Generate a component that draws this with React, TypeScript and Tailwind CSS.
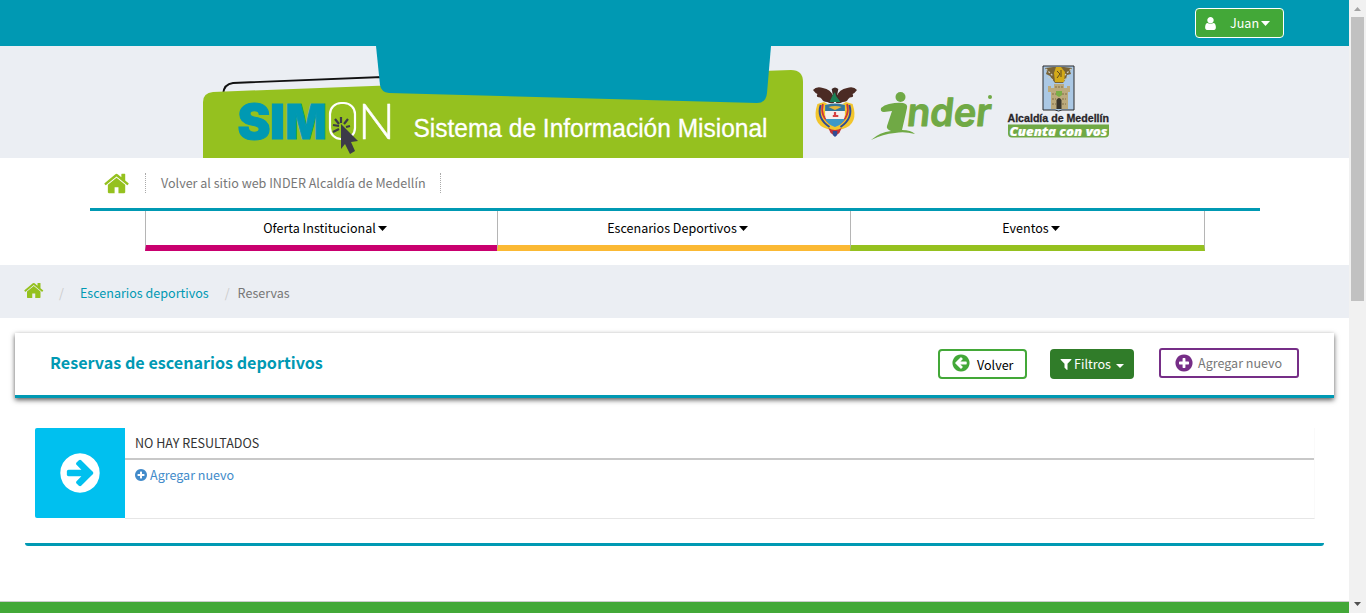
import type { ReactNode } from "react";

const CIRCLE =
  "M1664 896q0 209-103 385.5t-279.5 279.5-385.5 103-385.5-103-279.5-279.5-103-385.5 103-385.5 279.5-279.5 385.5-103 385.5 103 279.5 279.5 103 385.5z";
const PATHS = {
  home: "M1408 992v480q0 26-19 45t-45 19h-384v-384h-256v384h-384q-26 0-45-19t-19-45v-480q0-1 .5-3t.5-3l575-474 575 474q1 2 1 6zm223-69l-62 74q-8 9-21 11h-3q-13 0-21-7l-692-577-692 577q-12 8-24 7-13-2-21-11l-62-74q-8-10-7-23.5t11-21.5l719-599q32-26 76-26t76 26l244 204v-195q0-14 9-23t23-9h192q14 0 23 9t9 23v408l219 182q10 8 11 21.5t-7 23.5z",
  arrow:
    "M1413 896q0-27-18-45l-91-91-362-362q-18-18-45-18t-45 18l-91 91q-18 18-18 45t18 45l189 189h-502q-26 0-45 19t-19 45v128q0 26 19 45t45 19h502l-189 189q-18 18-18 45t18 45l91 91q18 18 45 18t45-18l362-362 91-91q18-18 18-45z" + CIRCLE,
  plus:
    "M1344 960v-128q0-26-19-45t-45-19h-256v-256q0-26-19-45t-45-19h-128q-26 0-45 19t-19 45v256h-256q-26 0-45 19t-19 45v128q0 26 19 45t45 19h256v256q0 26 19 45t45 19h128q26 0 45-19t19-45v-256h256q26 0 45-19t19-45z" + CIRCLE,
  filter:
    "M1595 295q17 41-14 70l-493 493v742q0 42-39 59-13 5-25 5-27 0-45-19l-256-256q-19-19-19-45v-486l-493-493q-31-29-14-70 17-39 59-39h1280q42 0 59 39z",
  user: "M1536 1399q0 109-62.5 187t-150.5 78h-854q-88 0-150.5-78t-62.5-187q0-85 8.5-160.5t31.5-152 58.5-131 94-89 134.5-34.5q131 128 313 128t313-128q76 0 134.5 34.5t94 89 58.5 131 31.5 152 8.5 160.5zm-256-887q0 159-112.5 271.5t-271.5 112.5-271.5-112.5-112.5-271.5 112.5-271.5 271.5-112.5 271.5 112.5 112.5 271.5z",
};

function Icon({ name, className }: { name: keyof typeof PATHS; className: string }) {
  return (
    <svg viewBox="0 0 1792 1792" fill="currentColor" fillRule="evenodd" className={`shrink-0 ${className}`}>
      <path d={PATHS[name]} />
    </svg>
  );
}

function Caret({ className = "" }: { className?: string }) {
  return (
    <svg viewBox="0 0 8 5" preserveAspectRatio="none" fill="currentColor" className={`shrink-0 ${className}`}>
      <path d="M0 0h8L4 5z" />
    </svg>
  );
}

function Coat() {
  return (
    <g transform="translate(835 112) scale(1.1 1) translate(-835 -112)">
      <path d="M834 97q-3-8-10-9-6-2-9 2 2 3 4 4-1 2 0 3 3 0 4 2 1 3 5 3 3 2 6 1zM836 97q3-8 10-9 6-2 9 2-2 3-4 4 1 2 0 3-3 0-4 2-1 3-5 3-3 2-6 1z" fill="#4b2b24" />
      <path d="M832 89q3-3 6 0l-1 6 3 7h-9l2-7z" fill="#3f2925" />
      <path d="M833 95l2-3 1 4 4 6h-10z" fill="#1c8055" />
      <path d="M819 104q-6 20 9 25l7 2 7-2q15-5 9-25l-6-2-3 2h-14l-3-2z" fill="#f2c52c" />
      <path d="M822 105q-4 13 8 22M848 105q4 13-8 22" fill="none" stroke="#304b94" strokeWidth="1.800" />
      <path d="M824 104q-3 12 7 20M846 104q3 12-7 20" fill="none" stroke="#cf3439" strokeWidth="1.600" />
      <path d="M826 105q9-3 18 0v10q0 7-9 11-9-4-9-11z" fill="#f4f0ee" />
      <path d="M826 105q9-3 18 0v6h-18z" fill="#34789c" />
      <path d="M829 107q6-2 12 0l-6 3z" fill="#e5b63a" />
      <path d="M826 119h18q-2 5-9 8-7-3-9-8z" fill="#3e98c5" />
      <path d="M835 112v5M833 116h5" stroke="#d54242" strokeWidth="2" />
      <path d="M829 128q6 4 12 0l-2 5-4 3-4-3z" fill="#c23335" />
      <path d="M833 131h4v4l-2 2-2-2z" fill="#304b94" />
    </g>
  );
}

function Crest() {
  return (
    <g>
      <path d="M1043 66h31v44h-12l-3.500 1-3.500-1h-12z" fill="#abc8e4" stroke="#29292b" strokeWidth="1" />
      <path d="M1045 68l8-1h11l8 1-2 3 1 3-4 1-1 4-3 4h-8l-3-4-2-3-4-2 1-3z" fill="#786337" />
      <path d="M1046 69l7 7M1071 69l-7 7M1048 77l5 3M1069 77l-5 3" stroke="#c9ccc4" strokeWidth="1.300" strokeDasharray="2 1.500" />
      <path d="M1056 67h5l4 5-1 10h-9l-1-9z" fill="#d4aa18" />
      <path d="M1057 71l3 3-3 4M1061 70v7" fill="none" stroke="#5e491e" />
      <path d="M1054 84h10v4h3v-2h3v6h-2v17h-17V92h-3v-6h3v2h3z" fill="#bcaa7c" />
      <path d="M1052 94h4M1062 94h5M1052 99h4M1062 99h4M1052 104h4M1062 104h4M1055 87h8" stroke="#806e47" strokeDasharray="2 1" />
      <path d="M1056 91h6v4l-3 2-3-2z" fill="#79ae45" />
      <path d="M1056.500 109v-9q2.500-4 5 0v9z" fill="#39352c" />
    </g>
  );
}

function Banner() {
  return (
    <svg width="1349" height="112" viewBox="0 46 1349 112" className="block bg-[#ebeef3]">
      <path d="M223 94q1-10 10-11l149-6v12z" fill="#ebeef3" stroke="#111" strokeWidth="1.900" />
      <path d="M203 158v-56q0-9 10-10l578-22q12 0 12 12v76z" fill="#95c11f" />
      <path d="M376 46h395l-4 47q-1 10-10 10l-368-10q-8-1-9-8z" fill="#0099b3" />
      <g fontFamily="Inter, sans-serif" fontSize="48" fontWeight="900" fill="#0099b3" stroke="#0099b3" strokeWidth="1">
        <text x="237.500" y="138.500" textLength="33" lengthAdjust="spacingAndGlyphs">S</text>
        <text x="270" y="138.500" textLength="15" lengthAdjust="spacingAndGlyphs">I</text>
        <text x="285.500" y="138.500" textLength="41" lengthAdjust="spacingAndGlyphs">M</text>
      </g>
      <rect x="330" y="103" width="25" height="36" rx="11" fill="none" stroke="#fff" strokeWidth="2.200" />
      <text x="358" y="139" fontFamily="Lato, sans-serif" fontSize="50" fontWeight="300" textLength="37" lengthAdjust="spacingAndGlyphs" fill="#fff" stroke="#fff" strokeWidth="0.500">N</text>
      <path d="M341 124l17 17-7 1 4 9-5 3-5-10-4 5z" fill="#3c3b48" />
      <path d="M341 117v6M348 119l-4 5M335 119l4 5M333 125l6 1M333 132l6-3M350 126l-4 1" stroke="#3c3b48" strokeWidth="2.200" />
      <text x="413.500" y="137" fontFamily="Liberation Sans, sans-serif" fontSize="25" textLength="354" lengthAdjust="spacingAndGlyphs" fill="#fff" stroke="#fff" strokeWidth="0.300">Sistema de Información Misional</text>
      <Coat />
      <g fill="#70a945">
        <circle cx="900.500" cy="97" r="5" />
        <path d="M881 108q3-3 8-4 9-2 14-1 5 1 4 5l-2 9-3 13q9 0 13 4-11-3-20-1-12 1-24 7 9-8 20-9-5-2-4-5l5-15-8 1q-4 0-3-4z" />
        <circle cx="990" cy="97" r="2" />
      </g>
      <g transform="translate(906 125.500) skewX(-6)">
        <text x="0" y="0" fontFamily="Inter, Liberation Sans, sans-serif" fontSize="39" fontWeight="600" textLength="84" lengthAdjust="spacingAndGlyphs" fill="#70a945" stroke="#70a945" strokeWidth="1" strokeLinejoin="round">nder</text>
      </g>
      <Crest />
      <text x="1007.500" y="122" fontFamily="Liberation Sans, sans-serif" fontSize="11.500" fontWeight="700" textLength="101.500" lengthAdjust="spacingAndGlyphs" fill="#282528" stroke="#282528" strokeWidth="0.300">Alcaldía de Medellín</text>
      <path d="M1008 124.500h101v9q0 4-4 4h-93q-4 0-4-4z" fill="#70a945" />
      <text x="1009.500" y="135.500" fontFamily="Open Sans, sans-serif" fontSize="13" fontStyle="italic" fontWeight="800" textLength="98" lengthAdjust="spacingAndGlyphs" fill="#fff" stroke="#fff" strokeWidth="0.200">Cuenta con vos</text>
    </svg>
  );
}

function MenuItem({ children, className }: { children: ReactNode; className: string }) {
  return (
    <a className={`flex h-[40px] items-start justify-center border-b-[6px] pt-[7px] pl-[7px] leading-[20px] text-black ${className}`}>
      {children}
      <Caret className="mt-[8px] ml-[2px] h-[5px] w-[9px]" />
    </a>
  );
}

export default function App() {
  return (
    <div className="flex h-[613px] w-[1366px] overflow-hidden bg-white font-['Noto_Sans_CJK_SC',sans-serif] text-[12.55px] leading-[20px] whitespace-nowrap">
      <div className="flex w-[1349px] shrink-0 flex-col">
        <header className="flex h-[46px] shrink-0 justify-end bg-[#0099b3] pt-[8px] pr-[65px]">
          <button className="flex h-[30px] w-[89px] items-center rounded-[4px] border border-white bg-[#43a838] pl-[7px] text-white">
            <Icon name="user" className="h-[15px] w-[15px]" />
            <span className="ml-[12px]">Juan</span>
            <Caret className="ml-[2px] h-[5px] w-[9px]" />
          </button>
        </header>
        <div className="h-[112px] shrink-0">
          <Banner />
        </div>
        <nav className="h-[107px] shrink-0 px-[90px]">
          <div className="flex h-[53px] w-[1170px] border-b-[3px] border-[#0099b3]">
            <a className="mt-[12px] ml-[14px] text-[#95c11f]"><Icon name="home" className="h-[27px] w-[27px]" /></a>
            <a className="mt-[15px] ml-[14px] h-[20px] w-[296px] border-x border-dotted border-[#aaa] pl-[15px] text-[#777]">
              Volver al sitio web INDER Alcaldía de Medellín
            </a>
          </div>
          <div className="ml-[55px] grid w-[1060px] grid-cols-[352px_353px_355px]">
            <MenuItem className="border-l border-l-[#b5b5b5] border-b-[#c9006f]">Oferta Institucional</MenuItem>
            <MenuItem className="border-l border-l-[#b5b5b5] border-b-[#fbb934]">Escenarios Deportivos</MenuItem>
            <MenuItem className="border-x border-x-[#b5b5b5] border-b-[#95c11f]">Eventos</MenuItem>
          </div>
        </nav>
        <div className="flex h-[53px] shrink-0 bg-[#ebeef3] pt-[18px] pl-[24px] text-[#777]">
          <Icon name="home" className="-mt-[3px] h-[21px] w-[21px] text-[#95c11f]" />
          <span className="ml-[14px] text-[#ccc]">/</span>
          <a className="ml-[16px] text-[#0099b3]">Escenarios deportivos</a>
          <span className="ml-[16px] text-[#ccc]">/</span>
          <span className="ml-[8px]">Reservas</span>
        </div>
        <section className="mt-[15px] ml-[15px] flex h-[65px] w-[1319px] shrink-0 border-b-[3px] border-[#0099b3] bg-white pl-[35px] shadow-[0_2px_5px_rgba(0,0,0,0.65)]">
          <h1 className="mt-[19px] w-[888px] text-[16.15px] font-bold text-[#0099b3]">Reservas de escenarios deportivos</h1>
          <button className="mt-[16px] flex h-[30px] w-[89px] items-center rounded-[4px] border-2 border-[#43a838] pl-[11px] text-black">
            <Icon name="arrow" className="-mt-[2px] h-[20px] w-[20px] rotate-180 text-[#43a838]" />
            <span className="mt-[1px] ml-[6px]">Volver</span>
          </button>
          <button className="mt-[16px] ml-[23px] flex h-[30px] w-[84px] items-center rounded-[4px] bg-[#307c29] pl-[9px] text-white">
            <Icon name="filter" className="h-[14px] w-[14px]" />
            <span className="ml-[1px]">Filtros</span>
            <Caret className="mt-[3px] ml-[5px] h-[4px] w-[8px]" />
          </button>
          <button className="mt-[15px] ml-[25px] flex h-[30px] w-[140px] items-center rounded-[3px] border-2 border-[#762e87] pl-[13px] text-[#777]">
            <Icon name="plus" className="h-[20px] w-[20px] text-[#762e87]" />
            <span className="ml-[4px]">Agregar nuevo</span>
          </button>
        </section>
        <section className="mt-[30px] ml-[25px] flex h-[118px] w-[1299px] shrink-0 rounded-[3px] border-b-[3px] border-[#0099b3] pl-[10px]">
          <div className="flex h-[90px] w-[90px] items-center justify-center rounded-l-[2px] bg-[#00c0ef] pb-[1px] text-white">
            <Icon name="arrow" className="h-[46px] w-[46px]" />
          </div>
          <div className="h-[91px] w-[1190px] border-r border-b border-r-[#fafafa] border-b-[#e6e6e6]">
            <p className="h-[32px] border-b-2 border-[#c8c8c8] pt-[5px] pl-[10px] text-[#333]">NO HAY RESULTADOS</p>
            <a className="flex items-center pt-[5px] pl-[9px] text-[#428bca]">
              <Icon name="plus" className="h-[14px] w-[14px]" />
              <span className="ml-[2px]">Agregar nuevo</span>
            </a>
          </div>
        </section>
        <footer className="mt-auto h-[12px] shrink-0 border-t border-[#ccc] bg-[#43a838]" />
      </div>
      <aside className="flex w-[17px] shrink-0 flex-col items-center bg-[#f1f1f1]">
        <Caret className="mt-[7px] h-[4px] w-[7px] rotate-180 text-[#a3a3a3]" />
        <div className="mt-[6px] h-[284px] w-[13px] bg-[#c1c1c1]" />
        <Caret className="mt-auto mb-[7px] h-[4px] w-[7px] text-[#505050]" />
      </aside>
    </div>
  );
}
